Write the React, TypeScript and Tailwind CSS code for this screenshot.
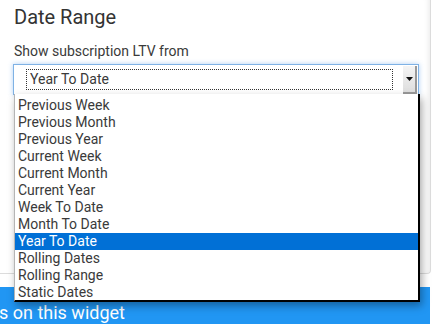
import React from 'react'

const options = [
  'Previous Week',
  'Previous Month',
  'Previous Year',
  'Current Week',
  'Current Month',
  'Current Year',
  'Week To Date',
  'Month To Date',
  'Year To Date',
  'Rolling Dates',
  'Rolling Range',
  'Static Dates',
]

const App = () => {
  const selected = 'Year To Date'

  return (
    <div
      className="relative w-[437px] h-[324px] overflow-hidden bg-white text-[#333]"
      style={{ fontFamily: 'Roboto, "Liberation Sans", sans-serif' }}
    >
      {/* widget settings panel */}
      <div className="flex flex-col w-[431px] h-[274px] border-r border-b border-[#dcdcdc] rounded-br-[4px] shadow-[inset_-6px_0_6px_-6px_rgba(0,0,0,0.12)] pl-[14px] pr-[12px] pt-[3px]">
        <h2 className="text-[20px] leading-[28px] text-[#333]">Date Range</h2>
        <p className="text-[14px] leading-[18px] mt-[11px] text-[#3a3a3a]">Show subscription LTV from</p>

        <div className="mt-[4px] ml-[-1px] w-[406px] h-[31px] flex items-center border border-[#7fb2e5] shadow-[0_0_5px_rgba(80,150,230,0.45)] bg-white">
          <div className="flex-1 h-full flex items-center pl-[12px] pr-[10px]">
            <div className="w-full h-[21px] border border-dotted border-[#333] flex items-center pl-[3px] text-[14px] text-[#3a3a3a]">
              {selected}
            </div>
          </div>
          <div className="w-[14px] h-[28px] mr-[1px] bg-gradient-to-b from-[#f4f4f4] to-[#dedede] border-r-2 border-b-2 border-[#9a9a9a] flex items-center justify-center">
            <svg width="7" height="4" viewBox="0 0 7 4">
              <path d="M0 0h7L3.5 4z" fill="#111" />
            </svg>
          </div>
        </div>
      </div>

      {/* footer bar */}
      <div className="mt-[13px] w-[431px] h-[50px] bg-[#2196f3] text-white text-[18px] flex items-center ml-[-1px]">
        s on this widget
      </div>

      {/* open dropdown list */}
      <ul className="absolute left-[14px] top-[94px] w-[406px] h-[208px] bg-white border-l border-[#b5b5b5] border-r-2 border-b-2 border-r-black border-b-black shadow-[2px_4px_8px_rgba(0,0,0,0.35)] pt-[3px]">
        {options.map((o) => (
          <li
            key={o}
            className={
              o === selected
                ? 'h-[17px] leading-[17px] pl-[3px] text-[14px] bg-[#0170d6] text-white'
                : 'h-[17px] leading-[17px] pl-[3px] text-[14px] text-[#3a3a3a]'
            }
          >
            {o}
          </li>
        ))}
      </ul>
    </div>
  )
}

export default App
